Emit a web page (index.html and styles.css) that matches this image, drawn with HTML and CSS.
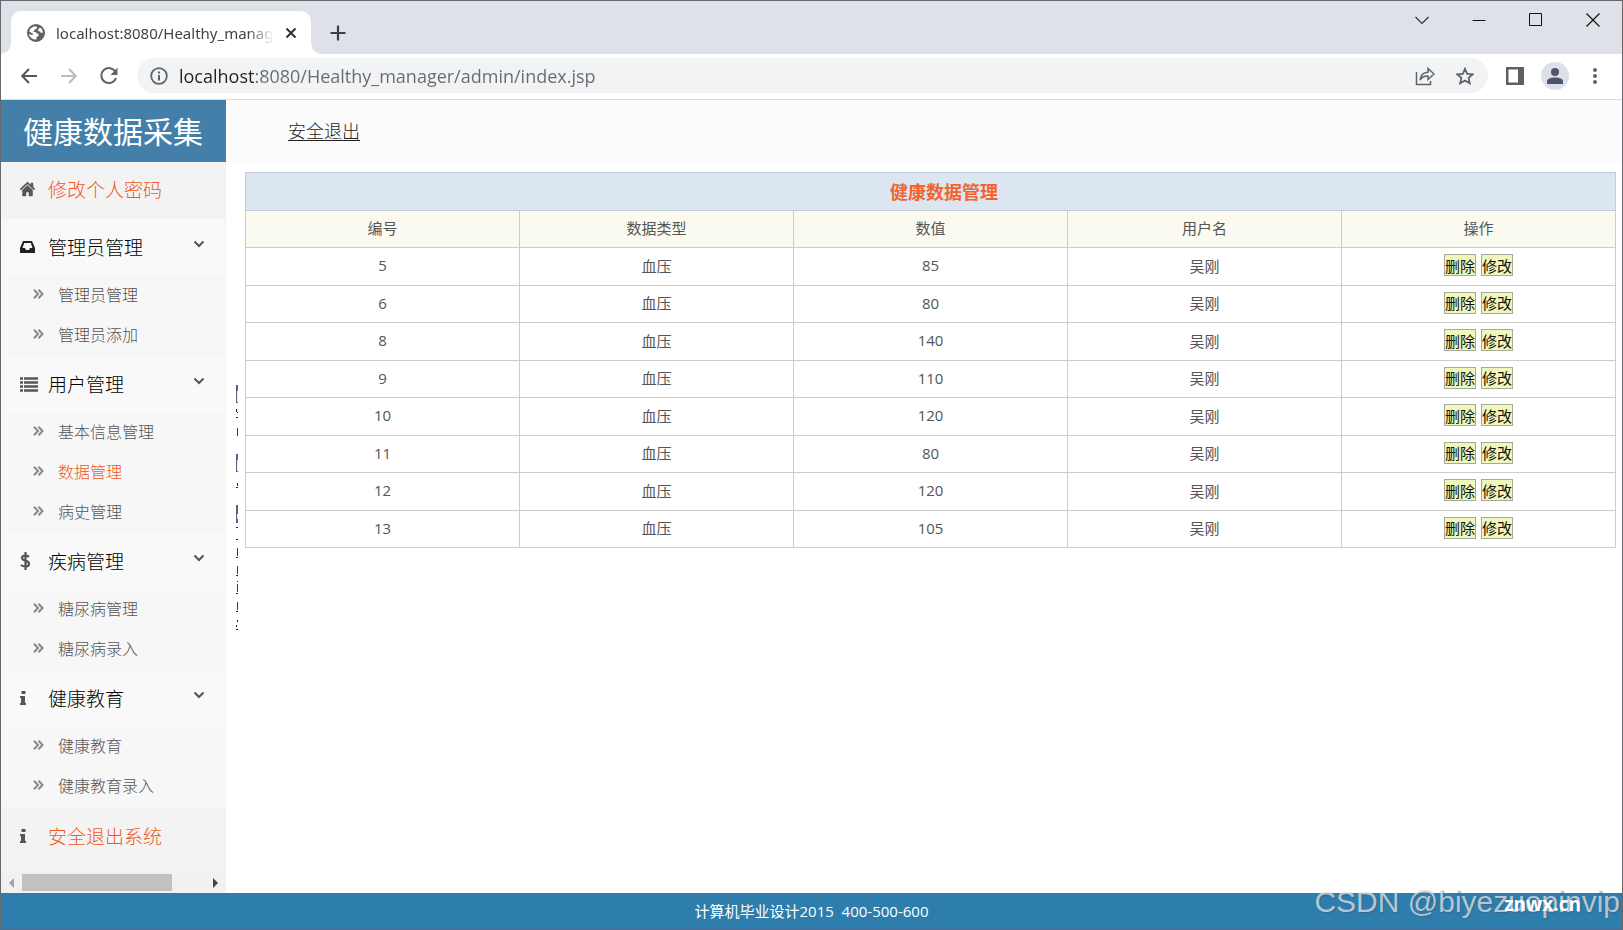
FILE: index.html
```html
<!DOCTYPE html>
<html lang="zh-CN">
<head>
<meta charset="utf-8">
<title>localhost:8080/Healthy_manager/admin/index.jsp</title>
<link rel="stylesheet" href="styles.css">
</head>
<body>
<svg class="defs" aria-hidden="true">
  <symbol id="arrows" viewBox="0 0 11 10"><path d="M1 .7 5 5 1 9.300M5.500.7l4 4.300-4 4.300" fill="none" stroke="#888" stroke-width="2"/></symbol>
  <symbol id="down" viewBox="0 0 12 8"><path d="M1.500 1.500 6 6l4.500-4.500" fill="none" stroke="#555" stroke-width="2"/></symbol>
  <symbol id="info" viewBox="0 0 18 16"><path d="M1.500 1h4v3h-4zM0 6h5v7h1v2H0v-2h1V8H0z" fill="#5a5459"/></symbol>
</svg>
<div class="window">
  <div class="titlebar">
    <div class="tab">
      <svg width="18" height="18" viewBox="0 0 18 18"><circle cx="9" cy="9" r="9" fill="#5f6368"/><path d="M2.200 7.500C3 4.500 5 2.500 8.500 2.200L10 3l-.5 2-2 .5-.3 1.700-1.700.8h3.300l1 1.500 1.700.3V12l-2 1v2.500C5.500 16 2.300 13 2.100 10l3.400 1.300.5-1.500zM12 4l1.500-.2c1.500 1.200 2.200 2.700 2.400 4.700L14 9l-1-1.500-2-.5z" fill="#fff"/></svg>
      <span class="tab-title">localhost:8080/Healthy_manager</span>
      <button class="tab-close" aria-label="关闭标签页"><svg width="12" height="12" viewBox="0 0 12 12"><path d="m1.500 1.500 9 9m0-9-9 9" stroke="#333" stroke-width="2"/></svg></button>
    </div>
    <button class="new-tab" aria-label="新标签页"><svg width="16" height="16" viewBox="0 0 16 16"><path d="M8 .5v15M.5 8h15" stroke="#3c4043" stroke-width="2.200"/></svg></button>
    <div class="controls">
      <button aria-label="搜索标签页"><svg width="14" height="14" viewBox="0 0 14 14"><path d="m.5 4 6.500 6.500L13.500 4" fill="none" stroke="#333" stroke-width="1.200"/></svg></button>
      <button aria-label="最小化"><svg width="14" height="14" viewBox="0 0 14 14"><path d="M.5 7.500h13" stroke="#111"/></svg></button>
      <button aria-label="最大化"><svg width="14" height="14" viewBox="0 0 14 14"><path d="M.5.5h12v12H.5z" fill="none" stroke="#111" stroke-width="1"/></svg></button>
      <button aria-label="关闭"><svg width="14" height="14" viewBox="0 0 14 14"><path d="m.5.5 13 13m0-13-13 13" stroke="#111" stroke-width="1.200"/></svg></button>
    </div>
  </div>
  <div class="toolbar">
    <button aria-label="后退"><svg width="16" height="16" viewBox="0 0 16 16"><path d="M16 8H1.500M8 1 1.200 8 8 15" fill="none" stroke="#55585c" stroke-width="2"/></svg></button>
    <button aria-label="前进"><svg width="16" height="16" viewBox="0 0 16 16"><path d="M0 8h14.500M8 1l6.800 7L8 15" fill="none" stroke="#bbb" stroke-width="2"/></svg></button>
    <button aria-label="重新加载"><svg width="18" height="18" viewBox="0 0 18 18"><path d="M15.500 5A7.500 7.500 0 1 0 16 11" fill="none" stroke="#5f6368" stroke-width="2"/><path d="M17.500.5v7.500h-7z" fill="#5f6368"/></svg></button>
    <div class="address">
      <svg width="18" height="18" viewBox="0 0 18 18"><circle cx="9" cy="9" r="7.800" fill="none" stroke="#5f6368" stroke-width="1.800"/><path d="M9 8v5.500M9 4.500v2" stroke="#5f6368" stroke-width="2"/></svg>
      <input class="url" type="text" aria-label="地址" value="localhost:8080/Healthy_manager/admin/index.jsp">
      <button aria-label="分享"><svg width="20" height="20" viewBox="0 0 20 20"><path d="M1.500 6v12.500h14V15" fill="none" stroke="#5f6368" stroke-width="1.500"/><path d="M5 14c.5-5 3-7.500 8-7.800V2.500L19 8l-6 5.500V10c-4-.2-6 1-8 4z" fill="none" stroke="#5f6368" stroke-width="1.500"/></svg></button>
      <button aria-label="收藏"><svg width="18" height="18" viewBox="0 0 18 18"><path d="m9 1.800 2.200 5 5.600.5-4.200 3.600 1.200 5.400L9 13.500l-4.800 2.800 1.200-5.400L1.200 7.300l5.600-.5z" fill="none" stroke="#5f6368" stroke-width="1.800"/></svg></button>
    </div>
    <button aria-label="侧边栏"><svg width="18" height="18" viewBox="0 0 18 18"><path d="M0 0h18v18H0zM2.500 2.500v13H12v-13z" fill="#5f6060" fill-rule="evenodd"/></svg></button>
    <button class="profile" aria-label="用户"><svg width="16" height="16" viewBox="0 0 16 16"><circle cx="8" cy="4" r="4" fill="#4f5569"/><path d="M0 16v-2.500C0 10.500 4 9.500 8 9.500s8 1 8 4V16z" fill="#4f5569"/></svg></button>
    <button aria-label="菜单"><svg width="4" height="16" viewBox="0 0 4 16"><circle cx="2" cy="2" r="2" fill="#5f6368"/><circle cx="2" cy="8" r="2" fill="#5f6368"/><circle cx="2" cy="14" r="2" fill="#5f6368"/></svg></button>
  </div>
  <div class="page">
    <aside class="sidebar">
      <h1 class="brand">健康数据采集</h1>
      <nav class="menu">
        <a class="item hot" href="#"><svg width="18" height="16" viewBox="0 0 18 16"><path d="M7.500 1 0 8l1 1 6.500-6L14 9l1-1-2-2V2h-2v2zM2.500 9l5-4.600 5 4.600v6H9v-4H6v4H2.500z" fill="#5a5459" stroke="#5a5459" stroke-width=".5"/></svg>修改个人密码</a>
        <a class="item group" href="#"><svg width="18" height="16" viewBox="0 0 18 16"><path d="M3 2h9l3 7v5H0V9zm1.200 2L2.500 9H5l1 2h3l1-2h2.500l-1.700-5z" fill="#222" fill-rule="evenodd"/></svg>管理员管理<svg class="down" width="12" height="8"><use href="#down"/></svg></a>
        <a class="sub" href="#"><svg width="11" height="10"><use href="#arrows"/></svg>管理员管理</a>
        <a class="sub" href="#"><svg width="11" height="10"><use href="#arrows"/></svg>管理员添加</a>
        <a class="item group" href="#"><svg width="18" height="16" viewBox="0 0 18 16"><path d="M0 2.500h3m1 0h14M0 6.500h3m1 0h14m-18 4h3m1 0h14m-18 4h3m1 0h14" stroke="#555" stroke-width="2.600"/></svg>用户管理<svg class="down" width="12" height="8"><use href="#down"/></svg></a>
        <a class="sub" href="#"><svg width="11" height="10"><use href="#arrows"/></svg>基本信息管理</a>
        <a class="sub hot" href="#"><svg width="11" height="10"><use href="#arrows"/></svg>数据管理</a>
        <a class="sub" href="#"><svg width="11" height="10"><use href="#arrows"/></svg>病史管理</a>
        <a class="item group" href="#"><svg width="18" height="18" viewBox="0 0 18 18"><path d="M9 4.800C7.500 3.500 2 2.700 2 6c0 3.200 7 2 7 5.700 0 3.500-5.500 3.300-8 1.300M5.500 0v18" fill="none" stroke="#555" stroke-width="2.200"/></svg>疾病管理<svg class="down" width="12" height="8"><use href="#down"/></svg></a>
        <a class="sub" href="#"><svg width="11" height="10"><use href="#arrows"/></svg>糖尿病管理</a>
        <a class="sub" href="#"><svg width="11" height="10"><use href="#arrows"/></svg>糖尿病录入</a>
        <a class="item group" href="#"><svg width="18" height="16"><use href="#info"/></svg>健康教育<svg class="down" width="12" height="8"><use href="#down"/></svg></a>
        <a class="sub" href="#"><svg width="11" height="10"><use href="#arrows"/></svg>健康教育</a>
        <a class="sub" href="#"><svg width="11" height="10"><use href="#arrows"/></svg>健康教育录入</a>
        <a class="item hot last" href="#"><svg width="18" height="16"><use href="#info"/></svg>安全退出系统</a>
      </nav>
      <div class="scrollbar">
        <button aria-label="向左滚动"><svg width="5" height="10" viewBox="0 0 5 10"><path d="M5 0v10L0 5z" fill="#a3a3a3"/></svg></button>
        <div class="track"><div class="thumb"></div></div>
        <button aria-label="向右滚动"><svg width="5" height="10" viewBox="0 0 5 10"><path d="M0 0v10l5-5z" fill="#444"/></svg></button>
      </div>
    </aside>
    <main class="main">
      <header class="topbar"><a href="#">安全退出</a></header>
      <div class="content">
        <svg class="sliver" width="2" height="246" viewBox="0 0 2 246">
          <path d="M0 0h2v18H0zM0 69h2v18H0zM0 120h2v18H0z" fill="#56627f"/>
          <path d="M1 6h1v11H1zM1 75h1v11H1zM1 129h1v5H1z" fill="#e7f0ff"/>
          <path d="M1 43h1v8H1zM1 163h1v8H1zM1 181h1v8H1zM1 199h1v8H1zM1 217h1v8H1z" fill="#8a1f0c"/>
          <path d="M0 24h1v3H0zM1 27h1v1H1zM0 32h2v1H0zM1 98h1v3H1zM0 102h2v1H0zM0 142h2v1H0zM0 154h2v1H0zM0 172h2v1H0zM0 190h2v1H0zM1 196h1v1H1zM0 208h2v1H0zM0 226h2v1H0zM1 235h1v2H1zM0 240h1v2H0zM0 244h2v1H0z" fill="#222"/>
        </svg>
        <table class="data">
          <thead>
            <tr class="caption"><th colspan="5">健康数据管理</th></tr>
            <tr class="heads"><th>编号</th><th>数据类型</th><th>数值</th><th>用户名</th><th>操作</th></tr>
          </thead>
          <tbody>
            <tr><td>5</td><td>血压</td><td>85</td><td>吴刚</td><td><button>删除</button><button>修改</button></td></tr>
            <tr><td>6</td><td>血压</td><td>80</td><td>吴刚</td><td><button>删除</button><button>修改</button></td></tr>
            <tr><td>8</td><td>血压</td><td>140</td><td>吴刚</td><td><button>删除</button><button>修改</button></td></tr>
            <tr><td>9</td><td>血压</td><td>110</td><td>吴刚</td><td><button>删除</button><button>修改</button></td></tr>
            <tr><td>10</td><td>血压</td><td>120</td><td>吴刚</td><td><button>删除</button><button>修改</button></td></tr>
            <tr><td>11</td><td>血压</td><td>80</td><td>吴刚</td><td><button>删除</button><button>修改</button></td></tr>
            <tr><td>12</td><td>血压</td><td>120</td><td>吴刚</td><td><button>删除</button><button>修改</button></td></tr>
            <tr><td>13</td><td>血压</td><td>105</td><td>吴刚</td><td><button>删除</button><button>修改</button></td></tr>
          </tbody>
        </table>
      </div>
    </main>
  </div>
  <footer class="footer">计算机毕业设计2015&nbsp; 400-500-600</footer>
  <div class="watermark">CSDN @biyezuopinvip</div>
  <div class="sitemark">znwx.cn</div>
</div>
</body>
</html>
```
FILE: styles.css
```css
* { box-sizing: border-box; }
body {
  margin: 0;
  font-family: "Open Sans", "Noto Sans CJK SC", sans-serif;
  font-size: 15px;
  color: #555;
}
button {
  border: 0;
  padding: 0;
  background: none;
  font: inherit;
  display: inline-flex;
  align-items: center;
  justify-content: center;
}
a { color: inherit; text-decoration: none; }
svg { flex: none; }
.defs { position: absolute; width: 0; height: 0; }
.window {
  position: relative;
  display: flex;
  flex-direction: column;
  min-height: 100vh;
  border: 1px solid #68686c;
  background: #fff;
  overflow: hidden;
}

/* browser frame */
.titlebar {
  display: flex;
  align-items: flex-end;
  height: 53px;
  padding-left: 10px;
  background: #dee1e8;
}
.tab {
  position: relative;
  display: flex;
  align-items: center;
  gap: 11px;
  width: 300px;
  height: 43px;
  padding: 0 14px 0 16px;
  border-radius: 10px 10px 0 0;
  background: #fff;
}
.tab::before, .tab::after {
  content: "";
  position: absolute;
  bottom: 0;
  width: 10px;
  height: 10px;
}
.tab::before { right: 100%; background: radial-gradient(circle at 0 0, transparent 9px, #fff 10px); }
.tab::after { left: 100%; background: radial-gradient(circle at 100% 0, transparent 9px, #fff 10px); }
.tab-title {
  flex: 1;
  overflow: hidden;
  white-space: nowrap;
  font-family: "Noto Sans", sans-serif;
  font-size: 15px;
  color: #444;
  mask-image: linear-gradient(to right, #000 88%, transparent);
}
.new-tab { width: 42px; height: 43px; margin-left: 6px; }
.controls { display: flex; align-self: flex-start; margin: 0 1px 0 auto; }
.controls button { width: 57px; height: 37px; }
.toolbar {
  display: flex;
  align-items: center;
  height: 46px;
  padding: 0 7px 2px 8px;
  border-bottom: 1px solid #d8d9dc;
}
.toolbar > button { width: 40px; height: 34px; }
.toolbar > .profile { width: 28px; height: 28px; margin: 0 6px; border-radius: 50%; background: #dde0ea; }
.address {
  flex: 1;
  display: flex;
  align-items: center;
  height: 35px;
  margin: 0 7px 0 8px;
  padding: 0 3px 0 13px;
  border-radius: 18px;
  background: #f1f3f4;
}
.address button { width: 40px; height: 34px; }
.url {
  flex: 1;
  min-width: 0;
  border: 0;
  padding: 0;
  margin-left: 11px;
  font-family: "Open Sans", sans-serif;
  font-size: 18px;
  color: transparent;
  background: linear-gradient(to right, #222 76px, #666a6e 76px);
  background-clip: text;
}

/* page */
.page { flex: 1; display: flex; }
.sidebar { display: flex; flex-direction: column; width: 225px; background: #f7f7f7; }
.brand {
  margin: 0;
  padding: 1px 0 0 22px;
  font-size: 30px;
  font-weight: 400;
  line-height: 61px;
  color: #fff;
  background: #437fa9;
}
.menu { flex: 1; display: flex; flex-direction: column; }
.item {
  display: flex;
  align-items: center;
  gap: 10px;
  height: 57px;
  padding: 0 0 3px 19px;
  font-size: 19px;
  font-weight: 300;
  background: #f3f3f3;
}
.group {
  padding: 0 20px 2px 19px;
  color: #000;
  background: #f9f9f9;
  border-right: 1px solid #f0f0f0;
}
.down { margin: 0 0 6px auto; }
.last { flex: 1; padding-bottom: 8px; }
.sub {
  display: flex;
  align-items: center;
  gap: 14px;
  height: 40px;
  padding: 0 0 4px 32px;
  font-size: 16px;
  font-weight: 300;
  color: #555;
}
.hot { color: #ee5a25; }
.scrollbar { display: flex; align-items: center; height: 21px; background: #f1f1f1; }
.scrollbar button { width: 21px; height: 21px; }
.track { flex: 1; }
.thumb { width: 82%; height: 17px; background: #c1c1c1; }
.main { flex: 1; min-width: 0; }
.topbar {
  height: 62px;
  padding-left: 62px;
  line-height: 62px;
  font-size: 18px;
  font-weight: 300;
  color: #222;
  background: #fbfbfb;
}
.topbar a { text-decoration: underline; text-underline-offset: 2px; }
.content { display: flex; align-items: flex-start; padding: 10px 6px 0 10px; }
.sliver { margin: 213px 7px 0 0; }
.data {
  width: 100%;
  table-layout: fixed;
  border-collapse: collapse;
  text-align: center;
}
.data th, .data td { height: 37px; padding: 0 0 3px; border: 1px solid #ccc; font-weight: 400; }
.data .caption th {
  height: 38px;
  padding: 0 0 2px 27px;
  font-size: 18px;
  font-weight: 700;
  color: #f4622d;
  background: #dce6f1;
  border-color: #c4cbd8;
}
.heads { background: #fafaf0; }
.data tbody tr:nth-child(odd) td { height: 38px; }
.data button {
  height: 22px;
  border: 1px solid #a5aa94;
  color: #111;
  background: #f0f7bb;
}
.data button + button { margin-left: 5px; }
.footer {
  height: 36px;
  line-height: 36px;
  text-align: center;
  color: #fff;
  background: #2d7dad;
}
.watermark, .sitemark { position: absolute; white-space: nowrap; }
.watermark {
  right: 2px;
  bottom: 9px;
  font-family: "Liberation Sans", sans-serif;
  font-size: 30px;
  line-height: 36px;
  color: rgba(222, 228, 234, .75);
  text-shadow: 1px 1px 1px rgba(70, 90, 110, .6);
}
.sitemark {
  right: 41px;
  bottom: 9px;
  font-size: 19px;
  font-weight: 700;
  line-height: 32px;
  color: #fff;
}
```
